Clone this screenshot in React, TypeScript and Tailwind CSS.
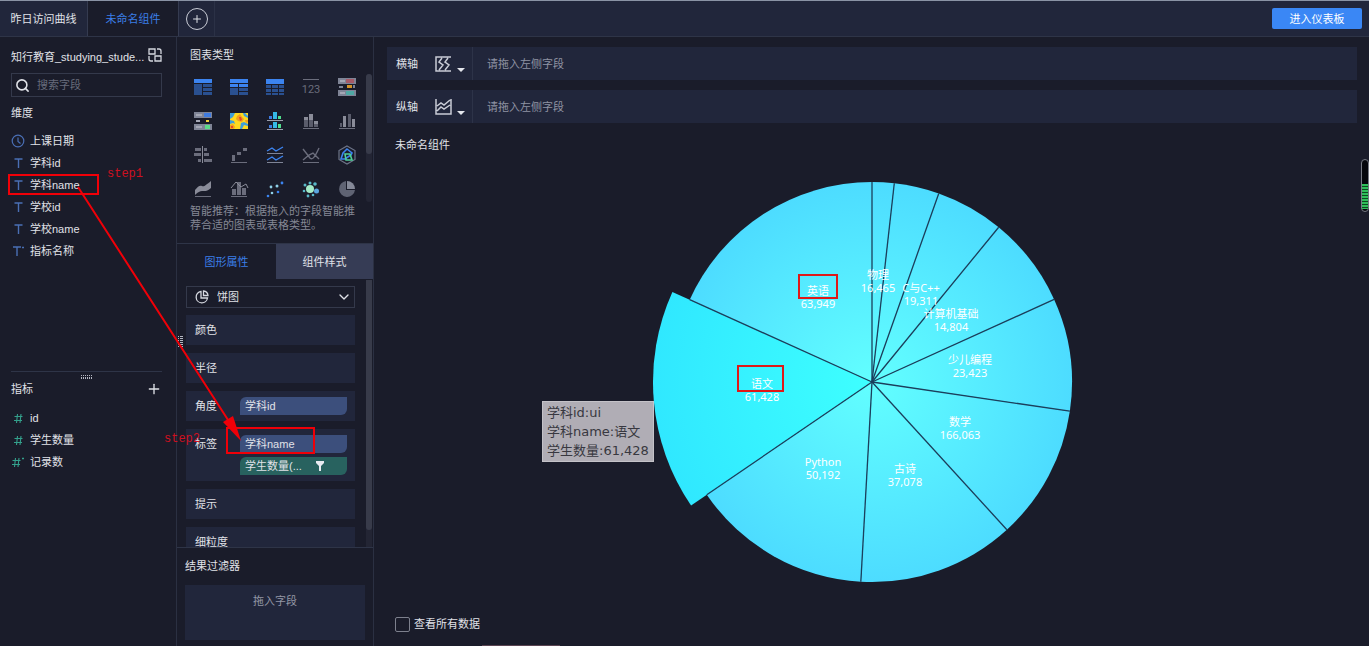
import type { ReactNode } from "react";
import { ChevronDown, Plus, Search } from "lucide-react";

const dimensions = [
  { name: "上课日期", type: "date" },
  { name: "学科id", type: "text" },
  { name: "学科name", type: "text" },
  { name: "学校id", type: "text" },
  { name: "学校name", type: "text" },
  { name: "指标名称", type: "text*" },
];

const metrics = [
  { name: "id", type: "num" },
  { name: "学生数量", type: "num" },
  { name: "记录数", type: "num*" },
];

// start / end are degrees, clockwise from 12 o'clock; x / y place the label
const slices = [
  { name: "物理", value: "16,465", start: 0, end: 6.4, x: 6, y: -107 },
  { name: "C与C++", value: "19,311", start: 6.4, end: 19.5, x: 49, y: -94 },
  { name: "计算机基础", value: "14,804", start: 19.5, end: 39.3, x: 79, y: -68 },
  { name: "", value: "", start: 39.3, end: 65.6, x: 0, y: 0 },
  { name: "少儿编程", value: "23,423", start: 65.6, end: 98.4, x: 98, y: -22 },
  { name: "数学", value: "166,063", start: 98.4, end: 137.6, x: 88, y: 40 },
  { name: "古诗", value: "37,078", start: 137.6, end: 183.2, x: 33, y: 87 },
  { name: "Python", value: "50,192", start: 183.2, end: 235.7, x: -49, y: 80 },
  { name: "语文", value: "61,428", start: 235.7, end: 294.3, x: -110, y: 2, active: true },
  { name: "英语", value: "63,949", start: 294.3, end: 360, x: -54, y: -91 },
];

function slicePath(start: number, end: number, r: number) {
  const point = (deg: number) => {
    const a = (deg * Math.PI) / 180;
    return `${(r * Math.sin(a)).toFixed(2)} ${(-r * Math.cos(a)).toFixed(2)}`;
  };
  return `M0 0L${point(start)}A${r} ${r} 0 0 1 ${point(end)}Z`;
}

const GREY = "#6b6d7c";

const chartTypes: { label: string; icon: ReactNode }[] = [
  {
    label: "分组表",
    icon: (
      <>
        <path fill="#3c84f0" d="M1 2h18v4H1z" />
        <path fill="#2a5090" d="M1 7h8v11H1zM10 7h9v3h-9zM10 11h9v3h-9zM10 15h9v3h-9z" />
      </>
    ),
  },
  {
    label: "交叉表",
    icon: (
      <>
        <path fill="#3c84f0" d="M1 2h18v4H1zM1 7h8v3H1zM10 7h9v3h-9z" />
        <path fill="#2a5090" d="M1 11h8v7H1zM10 11h9v3h-9zM10 15h9v3h-9z" />
      </>
    ),
  },
  {
    label: "明细表",
    icon: (
      <>
        <path fill="#3c84f0" d="M1 2h18v5H1z" />
        <path
          fill="#2a5090"
          d="M1 8h5v3H1zM7 8h6v3H7zM14 8h5v3h-5zM1 12h5v3H1zM7 12h6v3H7zM14 12h5v3h-5zM1 16h5v2H1zM7 16h6v2H7zM14 16h5v2h-5z"
        />
      </>
    ),
  },
  {
    label: "指标卡",
    icon: (
      <>
        <path fill={GREY} d="M2 2h16v1H2z" />
        <text x="10" y="16" fill={GREY} fontSize="11" textAnchor="middle">
          123
        </text>
      </>
    ),
  },
  {
    label: "KPI 指标卡",
    icon: (
      <>
        <path fill="#7f8496" d="M1 1h18v6H1zM1 13h18v6H1z" />
        <path fill="#a65a68" d="M9 2h8v4H9z" />
        <path fill="#4fa8a4" d="M9 14h8v4H9z" />
        <path fill="#d4932a" d="M10 8h5v3h-5z" />
        <path fill="#7f8496" d="M2 9h4v2H2zM16 8h2v3h-2z" />
        <path fill="#a4a7b5" d="M3 3h5v2H3zM3 15h5v2H3z" />
      </>
    ),
  },
  {
    label: "对比指标",
    icon: (
      <>
        <path fill="#7f8496" d="M1 1h18v6H1zM1 13h18v6H1z" />
        <path fill="#3f7be0" d="M11 2h7v4h-7z" />
        <path fill="#5ddc88" d="M12 14h5v4h-5z" />
        <path fill="#f0d13c" d="M13 9h3v2h-3z" />
        <path fill="#a4a7b5" d="M3 9h4v2H3zM3 3h6v2H3zM3 15h6v2H3z" />
      </>
    ),
  },
  {
    label: "热力图",
    icon: (
      <>
        <path fill="#ffd91f" d="M1 2h18v16H1z" />
        <path fill="#3f9ed8" d="M1 2h5l-2 4-3 2zM14 2h2l3 3v2l-4-2zM1 9l4 1 1 3-2-1-3 1zM12 12l3-1 4 2v2l-4-1-2 4h-2z" />
        <path fill="#f2a01d" d="M8 5l3-2 2 3 2 2-2 3-4-1-2-2zM1 14l3-1 2 3-1 2H1zM16 9h3v2l-2 1z" />
        <path fill="#e2452f" d="M10 6h2l1 3-2 1zM2 15h2v2H2z" />
      </>
    ),
  },
  {
    label: "多系列柱形图",
    icon: (
      <>
        <path fill="#3f7be0" d="M4 5h3v3H4zM4 14h3v3H4z" />
        <path fill="#35b9e6" d="M8 1h4v7H8zM8 11h4v6H8z" />
        <path fill="#4fe08c" d="M13 5h3v3h-3zM13 13h3v4h-3z" />
        <path fill="#9a9dac" d="M2 9h16v1H2zM2 18h16v1H2z" />
      </>
    ),
  },
  {
    label: "堆积柱形图",
    icon: (
      <>
        <path fill="#5a5c6b" d="M3 9h4v7H3zM8 9h4v7H8zM13 13h4v3h-4z" />
        <path fill="#8a8c99" d="M3 6h4v3H3zM8 3h4v6H8zM13 10h4v3h-4z" />
        <path fill={GREY} d="M2 17h16v1H2z" />
      </>
    ),
  },
  {
    label: "分组柱形图",
    icon: (
      <>
        <path fill="#5a5c6b" d="M3 12h2v4H3zM11 3h3v13h-3z" />
        <path fill="#8a8c99" d="M6 5h3v11H6zM15 8h3v8h-3z" />
        <path fill={GREY} d="M2 17h16v1H2z" />
      </>
    ),
  },
  {
    label: "对比条形图",
    icon: (
      <>
        <path fill={GREY} d="M2 3h6v3H2zM1 8h7v3H1zM5 14h3v3H5zM11 3h3v3h-3zM11 8h5v3h-5zM11 14h8v3h-8z" />
        <path fill="#8a8c99" d="M9 1h1v17H9z" />
      </>
    ),
  },
  {
    label: "瀑布图",
    icon: <path fill={GREY} d="M3 10h3v6H3zM8 7h4v3H8zM14 3h4v3h-4zM2 17h16v1H2z" />,
  },
  {
    label: "范围面积图",
    icon: (
      <>
        <path fill="none" stroke="#3c84f0" strokeWidth="1.4" d="M2 6l5-3 4 3 7-4M2 15l5-3 4 3 7-4" />
        <path fill="#7f8496" d="M2 8h16v1H2zM2 17h16v1H2z" />
      </>
    ),
  },
  {
    label: "折线图",
    icon: (
      <>
        <path fill="none" stroke={GREY} strokeWidth="1.4" d="M2 4l7 9c2 2 4 1 9-10M2 15l6-5 4-2 6 6" />
        <path fill={GREY} d="M2 17h16v1H2z" />
      </>
    ),
  },
  {
    label: "雷达图",
    icon: (
      <>
        <path fill="none" stroke="#6d7488" strokeWidth="1.2" d="M10 1l8 4.5v9L10 19l-8-4.5v-9z" />
        <path fill="none" stroke="#3c84f0" strokeWidth="1.6" d="M10 4l5 4-1 2-6 4H4l2-6z" />
        <path fill="none" stroke="#4fd19a" strokeWidth="1.6" d="M8 9h5l2 6H9z" />
      </>
    ),
  },
  {
    label: "面积图",
    icon: (
      <>
        <path fill="#8a8c99" d="M2 11c3-4 5-5 7-4s4-1 9-5v7c-4 4-7 3-9 3s-4 1-7 4z" />
        <path fill={GREY} d="M2 17h16v1H2z" />
      </>
    ),
  },
  {
    label: "组合图",
    icon: (
      <>
        <path fill={GREY} d="M3 10h4v6H3zM8 3h4v13H8zM13 9h4v7h-4zM2 17h16v1H2z" />
        <path fill="none" stroke="#8a8c99" d="M2 9l5-6 5 5 5-3 2 4" />
      </>
    ),
  },
  {
    label: "散点图",
    icon: (
      <>
        <g fill="#3c84f0">
          <circle cx="3" cy="17" r="1.3" />
          <circle cx="17" cy="4" r="1.4" />
          <circle cx="13" cy="13" r="1.3" />
        </g>
        <g fill="#8fd0e8">
          <circle cx="6" cy="8" r="1.4" />
          <circle cx="7" cy="14" r="1.3" />
          <circle cx="12" cy="7" r="1.5" />
        </g>
      </>
    ),
  },
  {
    label: "聚合气泡图",
    icon: (
      <>
        <circle cx="9" cy="10" r="4" fill="#a5ecc8" />
        <circle cx="15.5" cy="12" r="2.5" fill="#5ba6e0" />
        <g fill="#58b8c8">
          <circle cx="4" cy="6" r="1.5" />
          <circle cx="9" cy="4" r="1.5" />
          <circle cx="14" cy="5" r="1.8" />
          <circle cx="3" cy="12" r="1.3" />
          <circle cx="7" cy="17" r="1.4" />
          <circle cx="12" cy="16" r="1.3" />
        </g>
      </>
    ),
  },
  {
    label: "饼图",
    icon: (
      <>
        <path fill="#5f6373" d="M9 2v9h9a8 8 0 1 1-9-9z" />
        <path fill="#858998" d="M10 2a8 8 0 0 1 8 8h-8z" />
      </>
    ),
  },
];

function FieldIcon({ type }: { type: string }) {
  if (type === "date") {
    return (
      <svg viewBox="0 0 14 14" className="h-3.5 w-3.5" fill="none" stroke="#4a6fb5" strokeWidth="1.2">
        <circle cx="7" cy="7" r="5.8" />
        <path d="M7 3.5V7.5l2.500 2" />
      </svg>
    );
  }
  const isText = type.startsWith("text");
  return (
    <svg viewBox="0 0 14 14" className="h-3.5 w-3.5" fill="none" stroke={isText ? "#4a6fb5" : "#34a08c"}>
      {isText ? (
        <path strokeWidth="1.4" d={type === "text*" ? "M2 3h8M6 3v9" : "M3.5 3h8M7.5 3v9"} />
      ) : (
        <path
          strokeWidth="1.1"
          d={type === "num*" ? "M4.5 3l-1 9M8 3L7 12M1.5 5.5h8M1 9.5h8" : "M6.5 3l-1 9M10 3L9 12M3.5 5.5h8M3 9.5h8"}
        />
      )}
      {type.endsWith("*") && <path strokeWidth="1.5" d="M11 3.5h2" />}
    </svg>
  );
}

function FieldList({ items }: { items: { name: string; type: string }[] }) {
  return (
    <ul>
      {items.map((item) => (
        <li key={item.name} className="flex h-[22px] items-center gap-[5px]">
          <FieldIcon type={item.type} />
          <span>{item.name}</span>
        </li>
      ))}
    </ul>
  );
}

function PropertyRow({ label, children }: { label: string; children?: ReactNode }) {
  return (
    <div className="flex shrink-0 justify-between bg-[#21263b] py-[6px] pr-2 pl-[9px] leading-[18px]">
      <span>{label}</span>
      <div className="flex w-[107px] flex-col gap-1">{children}</div>
    </div>
  );
}

function AxisRow({ label, vertical }: { label: string; vertical?: boolean }) {
  return (
    <div className="flex h-[33px] items-center bg-[#21263b]">
      <div className="flex h-full w-[86px] items-center border-r border-[#2d3348] pl-[9px]">
        <span>{label}</span>
        <button aria-label={`${label}类型`} className="ml-4 flex items-center gap-[5px]">
          <svg viewBox="0 0 18 18" className="h-[18px] w-[18px]" fill="none" stroke="#c9ccd6" strokeWidth="1.5">
            {vertical ? (
              <path d="M2 1v15h15V1M3 8l4-3 3 2 6-5M3 13l4-4 3 2 6-4" />
            ) : (
              <path d="M17 2H2v14h15M8 3L5 7l4 3-4 5M14 3l-3 4 4 3-4 5" />
            )}
          </svg>
          <svg viewBox="0 0 8 4" className="mt-3 h-1 w-2" fill="#e4e6ec">
            <path d="M0 0h8L4 4z" />
          </svg>
        </button>
      </div>
      <span className="pl-[14px] text-[#8f93a3]">请拖入左侧字段</span>
    </div>
  );
}

function PieChart() {
  return (
    <svg viewBox="-220 -202 440 404" className="block h-[404px] w-[440px]">
      <defs>
        <radialGradient id="slice" gradientUnits="userSpaceOnUse" cx="0" cy="0" r="200">
          <stop offset="0" stopColor="#62ffff" />
          <stop offset="1" stopColor="#4ddcff" />
        </radialGradient>
        <radialGradient id="active" gradientUnits="userSpaceOnUse" cx="0" cy="0" r="219">
          <stop offset="0" stopColor="#3effff" />
          <stop offset="1" stopColor="#30e8ff" />
        </radialGradient>
      </defs>
      {slices.map((s) => (
        <path
          key={s.start}
          d={slicePath(s.start, s.end, s.active ? 219 : 200)}
          fill={s.active ? "url(#active)" : "url(#slice)"}
        />
      ))}
      <g stroke="#1b3f5c" strokeWidth="1.3">
        {slices.map((s) => (
          <path key={s.start} d={`M0 0V-${s.active ? 200 : 200}`} transform={`rotate(${s.start})`} />
        ))}
      </g>
      <g fill="#fff" fontSize="11" textAnchor="middle" fontFamily="'Noto Sans', 'Noto Sans CJK SC', sans-serif">
        {slices.map((s) => (
          <text key={s.start}>
            <tspan x={s.x} y={s.y + 4}>
              {s.name}
            </tspan>
            <tspan x={s.x} y={s.y + 17}>
              {s.value}
            </tspan>
          </text>
        ))}
      </g>
      <path d="M-73-107h38v23h-38zM-134-16h45v25h-45z" fill="none" stroke="#e01818" strokeWidth="2" />
    </svg>
  );
}

export default function App() {
  return (
    <div className="relative flex h-screen flex-col overflow-hidden bg-[#1a1c2a] font-['Liberation_Sans','Noto_Sans_CJK_SC',sans-serif] text-[11px] leading-4 text-[#e0e2e8]">
      <header className="flex h-[37px] shrink-0 items-center border-t border-b border-t-[#8a93a5] border-b-[#2e3447] bg-[#21263b]">
        <button className="h-full w-[88px] border-r border-[#353b50]">昨日访问曲线</button>
        <button className="h-full w-[91px] border-r border-[#353b50] bg-[#1a1c2a] text-[#3a7fe8]">未命名组件</button>
        <div className="flex h-full w-9 items-center justify-center border-r border-[#2b3146]">
          <button
            aria-label="添加组件"
            className="flex h-[22px] w-[22px] items-center justify-center rounded-full border border-[#c9ccd6]"
          >
            <Plus size={12} strokeWidth={2} />
          </button>
        </div>
        <button className="mr-[7px] ml-auto h-[21px] w-[90px] rounded-xs bg-[#3a87f5] text-white">进入仪表板</button>
      </header>

      <div className="flex min-h-0 flex-1">
        {/* Fields */}
        <aside className="flex w-[177px] shrink-0 flex-col border-r border-[#2b3042] pr-[14px] pl-[11px]">
          <div className="flex-1 pt-3">
            <div className="flex items-center justify-between">
              <span className="whitespace-nowrap">知行教育_studying_stude...</span>
              <button aria-label="切换数据集" className="-mt-1">
                <svg viewBox="0 0 14 14" className="h-3.5 w-3.5" fill="none" stroke="#d5d8e0" strokeWidth="1.3">
                  <path d="M1 1h6v5H1zM7 8h6v5H7zM9 1h2q2 0 2 2v3M1 8v3q0 2 2 2h2" />
                </svg>
              </button>
            </div>
            <label className="mt-2 flex h-6 items-center gap-[7px] border border-[#34394b] pl-[3px]">
              <Search size={15} strokeWidth={2.5} className="shrink-0" />
              <input
                aria-label="搜索字段"
                placeholder="搜索字段"
                className="w-full min-w-0 bg-transparent outline-none placeholder:text-[#676b7b]"
              />
            </label>
            <h2 className="mt-2 mb-[9px]">维度</h2>
            <FieldList items={dimensions} />
          </div>

          <div className="h-[275px] shrink-0 border-t border-[#2e3447]">
            <svg viewBox="0 0 12 4" className="mx-auto mt-[3px] h-1 w-3" fill="#b4b7c2">
              <path d="M0 0h1v1H0zM2 0h1v1H2zM4 0h1v1H4zM6 0h1v1H6zM8 0h1v1H8zM10 0h1v1h-1zM0 2h1v2H0zM2 2h1v2H2zM4 2h1v2H4zM6 2h1v2H6zM8 2h1v2H8zM10 2h1v2h-1z" />
            </svg>
            <div className="mt-[2px] mb-[10px] flex items-center justify-between">
              <h2>指标</h2>
              <button aria-label="添加指标">
                <Plus size={16} strokeWidth={2} />
              </button>
            </div>
            <FieldList items={metrics} />
          </div>
        </aside>

        {/* Chart settings */}
        <section className="relative flex w-[197px] shrink-0 flex-col border-r border-[#2b3042]">
          <h2 className="mt-[10px] mb-[11px] pl-[13px]">图表类型</h2>
          <div className="flex shrink-0 justify-between pr-px pl-4">
            <div className="grid grid-cols-5 gap-x-4 gap-y-[14px] py-[3px]">
              {chartTypes.map((type) => (
                <button key={type.label} aria-label={type.label} className="h-5 w-5">
                  <svg viewBox="0 0 20 20" className="block h-5 w-5 font-['Roboto',sans-serif]">
                    {type.icon}
                  </svg>
                </button>
              ))}
            </div>
            <div className="w-[6px] rounded-full bg-[#232534]">
              <div className="h-20 rounded-full bg-[#383b4a]" />
            </div>
          </div>
          <p className="mt-[2px] mb-[11px] pr-4 pl-[13px] leading-[14px] text-[#858895]">
            智能推荐：根据拖入的字段智能推荐合适的图表或表格类型。
          </p>

          <div className="flex h-9 shrink-0 border-t border-[#2e3447]">
            <button className="w-[99px] text-[#3a7fe8]">图形属性</button>
            <button className="flex-1 bg-[#363c55]">组件样式</button>
          </div>

          <div className="flex min-h-0 flex-1 justify-between overflow-hidden pr-px pl-[9px]">
            <div className="flex w-[169px] flex-col gap-2 pt-[7px]">
              <div className="relative -mb-px h-[22px] shrink-0 border border-[#34394b]">
                <svg
                  viewBox="0 0 14 14"
                  className="pointer-events-none absolute top-[3px] left-2 h-3.5 w-3.5"
                  fill="none"
                  stroke="#d5d8e0"
                  strokeWidth="1.3"
                >
                  <path d="M6 1.5a5.700 5.700 0 1 0 6.500 6.500H6zM8.500 1v4.500H13A5 5 0 0 0 8.500 1z" />
                </svg>
                <select aria-label="图形类型" className="block h-5 w-full appearance-none bg-transparent pl-[30px] outline-none">
                  <option>饼图</option>
                </select>
                <ChevronDown size={16} className="pointer-events-none absolute top-[2px] right-[2px]" />
              </div>
              <PropertyRow label="颜色" />
              <PropertyRow label="半径" />
              <PropertyRow label="角度">
                <span className="rounded-tl-md rounded-br-md bg-[#3c4f7c] pl-[5px]">学科id</span>
              </PropertyRow>
              <PropertyRow label="标签">
                <span className="rounded-tl-md rounded-br-md bg-[#3c4f7c] pl-[5px]">学科name</span>
                <span className="flex items-center justify-between rounded-tl-md rounded-br-md bg-[#28625f] pr-[23px] pl-[5px]">
                  学生数量(...
                  <svg viewBox="0 0 8 10" className="h-[10px] w-2" fill="#e8eaf0">
                    <path d="M0 0h8v2L5 5v5H3V5L0 2z" />
                  </svg>
                </span>
              </PropertyRow>
              <PropertyRow label="提示" />
              <PropertyRow label="细粒度" />
            </div>
            <div className="mt-px w-[6px] bg-[#232534]">
              <div className="h-[250px] rounded-b-full bg-[#383b4a]" />
            </div>
          </div>

          <div className="shrink-0 border-t border-[#2e3447] px-2 pt-[10px] pb-[6px]">
            <h2>结果过滤器</h2>
            <div className="mt-[11px] h-[55px] bg-[#21263b] pt-2 text-center text-[#9396a5]">拖入字段</div>
          </div>

          {/* Resize grip */}
          <svg viewBox="0 0 6 12" className="absolute top-[299px] left-px h-3 w-1.5" fill="#b4b7c2">
            <path d="M0 0h1v1H0zM0 2h1v1H0zM0 4h1v1H0zM0 6h1v1H0zM0 8h1v1H0zM0 10h1v1H0zM2 0h3v1H2zM2 2h3v1H2zM2 4h3v1H2zM2 6h3v1H2zM2 8h3v1H2zM2 10h3v1H2z" />
          </svg>
        </section>

        {/* Preview */}
        <main className="flex min-w-0 flex-1 flex-col pt-[10px] pr-3 pb-[14px] pl-[13px]">
          <div className="flex flex-col gap-[10px]">
            <AxisRow label="横轴" />
            <AxisRow label="纵轴" vertical />
          </div>
          <h1 className="mt-[14px] pl-2">未命名组件</h1>
          <div className="flex min-h-0 flex-1 items-center justify-center pb-[6px]">
            <div className="relative">
              <PieChart />
              <div
                role="tooltip"
                className="absolute top-[221px] -left-[110px] border border-[#c4c2c8] bg-[#b0adb5] px-1 py-px font-['DejaVu_Sans','Noto_Sans_CJK_SC',sans-serif] text-[13px] leading-[19px] whitespace-nowrap text-[#383840]"
              >
                <div>学科id:ui</div>
                <div>学科name:语文</div>
                <div>学生数量:61,428</div>
              </div>
            </div>
          </div>
          <label className="flex items-center gap-1 self-start pl-2">
            <input type="checkbox" className="h-[15px] w-[15px] appearance-none rounded-xs border border-[#7d808d]" />
            查看所有数据
          </label>
        </main>
      </div>

      {/* Drag steps */}
      <svg className="pointer-events-none absolute inset-0 h-full w-full">
        <path d="M9 175h89v19H9zM227 428h87v25h-87zM78 187L230 423" fill="none" stroke="#f00008" strokeWidth="2" />
        <path d="M223 422l10-6 8 25z" fill="#f00008" />
        <g fill="#d01020" fontSize="12" fontFamily="'Liberation Mono', monospace">
          <text x="107" y="177">
            step1
          </text>
          <text x="164" y="442">
            step2
          </text>
        </g>
      </svg>

      {/* Volume meter */}
      <div className="absolute top-[159px] right-0 flex h-[53px] w-2 flex-col justify-end rounded-sm border border-[#777a85] bg-[#05060c] pb-[2px]">
        <div className="h-[25px] bg-[repeating-linear-gradient(#2fbf5a_0_2px,#0c4a20_2px_3px)]" />
      </div>
      <div className="absolute bottom-0 left-[482px] h-px w-[78px] bg-[#5a4452]" />
    </div>
  );
}
